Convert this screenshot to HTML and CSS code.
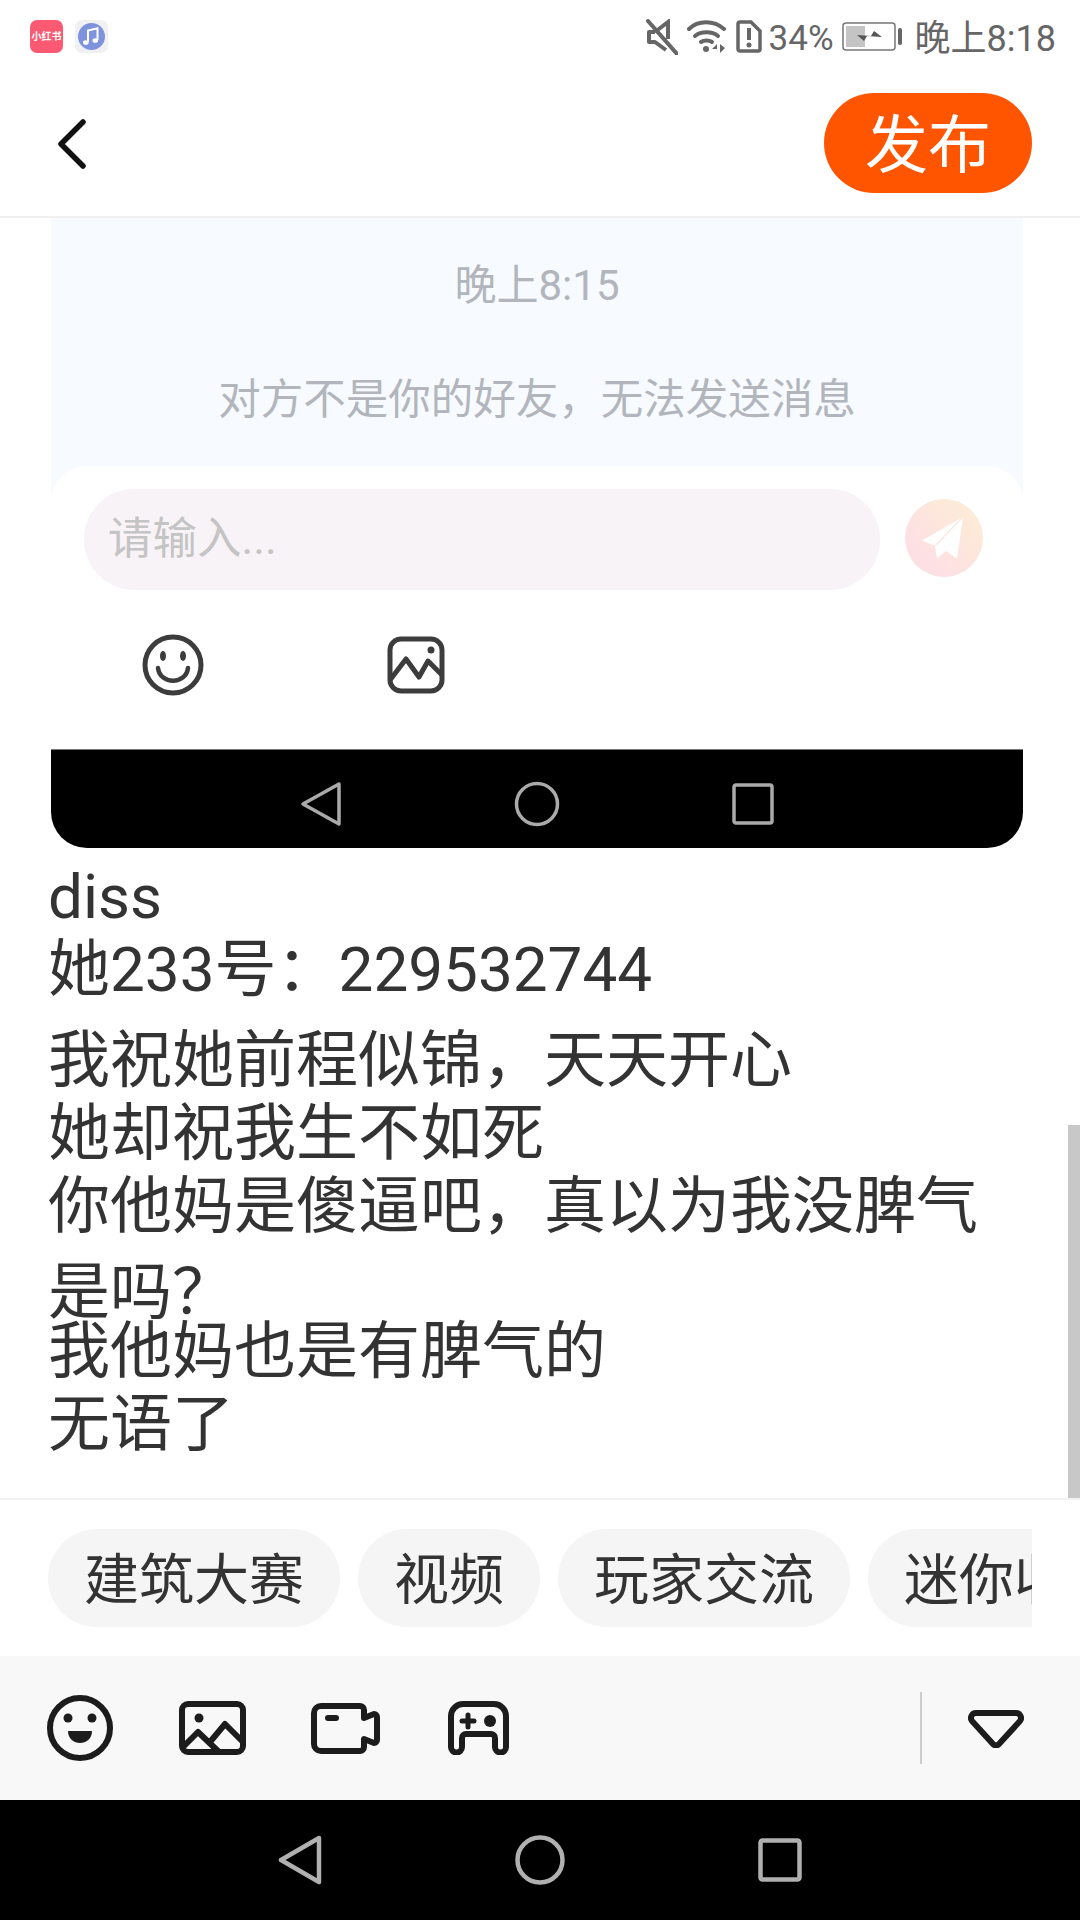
FILE: index.html
```html
<!DOCTYPE html>
<html lang="zh-CN">
<head>
    <meta charset="UTF-8">
    <meta name="viewport" content="width=device-width, initial-scale=1.0">
    <title>发布</title>
    <link rel="stylesheet" href="styles.css">
</head>
<body>
    <!-- barra de status -->
    <div class="status">
        <div class="app-icons">
            <div class="app-red">小红书</div>
            <div class="app-music">
                <svg width="33" height="33" viewBox="0 0 33 33">
                    <circle cx="16.5" cy="16.5" r="13.5" fill="#7f93dc"/>
                    <path d="M13 22V10.5l9.5-2.2V20" fill="none" stroke="#fff" stroke-width="2"/>
                    <ellipse cx="10.8" cy="22.5" rx="2.8" ry="2.3" fill="#fff"/>
                    <ellipse cx="20.3" cy="20.5" rx="2.8" ry="2.3" fill="#fff"/>
                </svg>
            </div>
        </div>
        <div class="status-right">
            <svg class="ic-mute" width="32" height="36" viewBox="0 0 32 36" fill="none" stroke="#666" stroke-width="4">
                <path d="M9 13H3v10h6l11 8" stroke-linejoin="round"/>
                <path d="M9 13 22 3v17"/>
                <path d="M2 2l29 33" stroke-linecap="round"/>
            </svg>
            <svg class="ic-wifi" width="39" height="33" viewBox="0 0 39 33" fill="none" stroke="#666" stroke-width="4" stroke-linecap="round">
                <path d="M2 9C11 0 27 0 37 9"/>
                <path d="M8 16c6-5 17-5 23 0"/>
                <path d="M14 22c3-2 8-2 11 0"/>
                <circle cx="19" cy="29" r="3" fill="#666" stroke="none"/>
                <path d="M30 24l-5 5h5zM33 24v9l5-5z" fill="#666" stroke="none"/>
            </svg>
            <svg class="ic-sim" width="26" height="33" viewBox="0 0 26 33" fill="none">
                <path d="M4 2h11l9 9v18a2 2 0 0 1-2 2H4a2 2 0 0 1-2-2V4a2 2 0 0 1 2-2z" stroke="#666" stroke-width="3.500"/>
                <path d="M13 8v12" stroke="#666" stroke-width="4"/>
                <circle cx="13" cy="25" r="2.500" fill="#666"/>
            </svg>
            <span class="pct">34%</span>
            <svg class="ic-bat" width="60" height="30" viewBox="0 0 60 30">
                <rect x="1" y="1" width="52" height="27" rx="3" fill="#fff" stroke="#777" stroke-width="1.500"/>
                <rect x="4" y="4" width="19" height="21" fill="#c4c4c4"/>
                <path d="M15 13l14 1 3-5 8 6-15-1-3 5z" fill="#555"/>
                <rect x="56" y="6" width="4" height="17" rx="2" fill="#666"/>
            </svg>
            <span class="time">晚上8:18</span>
        </div>
    </div>

    <div class="topbar">
        <svg class="voltar" width="30" height="50" viewBox="0 0 30 50" fill="none" stroke="#111" stroke-width="5.500" stroke-linecap="round" stroke-linejoin="round">
            <path d="M26 3 4 25l22 22"/>
        </svg>
        <button class="publicar">发布</button>
    </div>

    <div class="conteudo">
        <!-- captura de tela dentro do post -->
        <div class="shot">
            <div class="shot-chat">
                <div class="shot-time">晚上8:15</div>
                <div class="shot-msg">对方不是你的好友，无法发送消息</div>
            </div>
            <div class="shot-panel">
                <div class="shot-input-row">
                    <div class="shot-input">请输入...</div>
                    <div class="shot-send">
                        <svg width="46" height="46" viewBox="0 0 46 46">
                            <path d="M42 2 1 25.500 14 31l2 12.500 9-7.500 11 7.500z" fill="#fff"/>
                            <path d="M42 2 14 31" stroke="#fbe8e6" stroke-width="1.500"/>
                        </svg>
                    </div>
                </div>
                <div class="shot-tools">
                    <div class="shot-tool">
                        <svg width="62" height="62" viewBox="0 0 62 62" fill="none" stroke="#3c3c3c" stroke-width="5">
                            <circle cx="31" cy="31" r="28"/>
                            <path d="M16 34c2 17 28 17 30 0" stroke-width="4.500" stroke-linecap="round"/>
                            <ellipse cx="21" cy="22" rx="3" ry="5" fill="#3c3c3c" stroke="none"/>
                            <ellipse cx="41" cy="22" rx="3" ry="5" fill="#3c3c3c" stroke="none"/>
                        </svg>
                    </div>
                    <div class="shot-tool">
                        <svg width="58" height="58" viewBox="0 0 58 58" fill="none" stroke="#3c3c3c" stroke-width="5">
                            <rect x="3" y="3" width="52" height="52" rx="11"/>
                            <path d="M3 44 19 23l13 18 9-16 14 14" stroke-linejoin="round"/>
                            <circle cx="44" cy="14" r="3.500" fill="#3c3c3c" stroke="none"/>
                        </svg>
                    </div>
                </div>
                <div class="shot-nav">
                    <svg width="42" height="46" viewBox="0 0 42 46" fill="none" stroke="#aaa" stroke-width="3.500" stroke-linejoin="round">
                        <path d="M39 3 3 23l36 20z"/>
                    </svg>
                    <svg width="46" height="46" viewBox="0 0 46 46" fill="none" stroke="#aaa" stroke-width="3.500">
                        <circle cx="23" cy="23" r="20.500"/>
                    </svg>
                    <svg width="42" height="42" viewBox="0 0 42 42" fill="none" stroke="#aaa" stroke-width="3.500" stroke-linejoin="round">
                        <rect x="2" y="2" width="38" height="38" rx="2"/>
                    </svg>
                </div>
            </div>
        </div>

        <div class="texto">
            <p class="bloco-a">diss<br>她233号：229532744</p>
            <p class="bloco-b">我祝她前程似锦，天天开心<br>她却祝我生不如死</p>
            <p class="bloco-c">你他妈是傻逼吧，真以为我没脾气是吗？</p>
            <p class="bloco-d">我他妈也是有脾气的<br>无语了</p>
        </div>
        <div class="scrollbar"></div>
    </div>

    <div class="tags">
        <div class="tags-lista">
            <span class="tag">建筑大赛</span>
            <span class="tag">视频</span>
            <span class="tag">玩家交流</span>
            <span class="tag">迷你收藏</span>
        </div>
    </div>

    <div class="toolbar">
        <div class="tool">
            <svg width="66" height="66" viewBox="0 0 66 66" fill="none" stroke="#1c1c1c" stroke-width="6">
                <circle cx="33" cy="33" r="30"/>
                <circle cx="21" cy="23" r="4.500" fill="#1c1c1c" stroke="none"/>
                <circle cx="45" cy="23" r="4.500" fill="#1c1c1c" stroke="none"/>
                <path d="M21 36h24c0 16-24 16-24 0z" fill="#1c1c1c" stroke="none"/>
            </svg>
        </div>
        <div class="tool">
            <svg width="67" height="54" viewBox="0 0 67 54" fill="none" stroke="#1c1c1c" stroke-width="6" stroke-linejoin="round">
                <rect x="3" y="3" width="61" height="48" rx="6"/>
                <circle cx="20" cy="17" r="4.500" fill="#1c1c1c" stroke="none"/>
                <path d="M4 46 19 31l21 20"/>
                <path d="M31 41l15-18 18 18"/>
            </svg>
        </div>
        <div class="tool">
            <svg width="69" height="51" viewBox="0 0 69 51" fill="none" stroke="#1c1c1c" stroke-width="6" stroke-linejoin="round">
                <path d="M10 3h39a4 4 0 0 1 4 4v8l10-4a3 3 0 0 1 3 3v23a3 3 0 0 1-3 3l-10-4v8a4 4 0 0 1-4 4H10a7 7 0 0 1-7-7V10a7 7 0 0 1 7-7z"/>
                <path d="M17 15h8" stroke-linecap="round"/>
            </svg>
        </div>
        <div class="tool">
            <svg width="61" height="54" viewBox="0 0 61 54" fill="none" stroke="#1c1c1c" stroke-width="6">
                <path d="M15 3h31a12 12 0 0 1 12 12v31a5 5 0 0 1-11 0v-9a4 4 0 0 0-4-4H18a4 4 0 0 0-4 4v9a5 5 0 0 1-11 0V15A12 12 0 0 1 15 3z"/>
                <path d="M14 20h12M20 14v12" stroke-width="5" stroke-linecap="round"/>
                <circle cx="42" cy="20" r="6" fill="#1c1c1c" stroke="none"/>
            </svg>
        </div>
        <div class="tool-fim">
            <div class="divisor"></div>
            <svg class="recolher" width="56" height="38" viewBox="0 0 56 38" fill="none" stroke="#1c1c1c" stroke-width="6" stroke-linejoin="round">
                <path d="M8 3h40a5 5 0 0 1 4 8L31 34a4 4 0 0 1-6 0L4 11a5 5 0 0 1 4-8z"/>
            </svg>
        </div>
    </div>

    <div class="navbar">
        <svg width="44" height="50" viewBox="0 0 44 50" fill="none" stroke="#b0b0b0" stroke-width="4.500" stroke-linejoin="round">
            <path d="M41 3 3 25l38 22z"/>
        </svg>
        <svg width="50" height="50" viewBox="0 0 50 50" fill="none" stroke="#b0b0b0" stroke-width="4.500">
            <circle cx="25" cy="25" r="22.500"/>
        </svg>
        <svg width="44" height="44" viewBox="0 0 44 44" fill="none" stroke="#b0b0b0" stroke-width="4.500" stroke-linejoin="round">
            <rect x="2.500" y="2.500" width="39" height="39" rx="2"/>
        </svg>
    </div>
</body>
</html>
```
FILE: styles.css
```css
* {
    box-sizing: border-box;
}
body {
    margin: 0;
    width: 1080px;
    height: 1920px;
    overflow: hidden;
    background-color: #fff;
    font-family: Roboto, "Noto Sans CJK SC", sans-serif;
    color: #333;
}

/* status */
.status {
    height: 72px;
    padding: 20px 24px 0 30px;
    display: flex;
    justify-content: space-between;
    align-items: flex-start;
}
.app-icons {
    display: flex;
    gap: 12px;
}
.app-red {
    width: 33px;
    height: 33px;
    border-radius: 7px;
    background-color: #fb5a72;
    color: #fff;
    font-size: 10px;
    font-weight: 700;
    line-height: 33px;
    text-align: center;
    white-space: nowrap;
}
.app-music {
    width: 33px;
    height: 33px;
    border-radius: 7px;
    background-color: #f1f1f4;
}
.status-right {
    display: flex;
    align-items: center;
    height: 33px;
    color: #666;
}
.ic-mute {
    margin-right: 9px;
}
.ic-wifi {
    margin-right: 10px;
}
.ic-sim {
    margin-right: 7px;
}
.pct {
    font-size: 35px;
    margin: 3px 8px 0 0;
}
.ic-bat {
    margin-right: 13px;
}
.time {
    font-size: 36px;
    margin-top: -3px;
}

/* cabecalho */
.topbar {
    height: 146px;
    padding: 0 48px 2px 57px;
    display: flex;
    justify-content: space-between;
    align-items: center;
    border-bottom: 2px solid #f0f0f0;
}
.voltar {
    margin-top: 2px;
}
.publicar {
    width: 208px;
    height: 100px;
    border: none;
    border-radius: 50px;
    background-color: #ff5500;
    color: #fff;
    font-family: inherit;
    font-size: 63px;
    padding: 0 0 8px;
}

/* area do post */
.conteudo {
    position: relative;
    height: 1280px;
    overflow: hidden;
}
.scrollbar {
    position: absolute;
    right: 0;
    bottom: 0;
    width: 12px;
    height: 373px;
    background-color: #c8c8c8;
}

.shot {
    margin: 0 57px 0 51px;
    height: 630px;
    background: linear-gradient(#f7faff 75%, #f4f3f7 80%);
    border-radius: 0 0 36px 36px;
    overflow: hidden;
}
.shot-chat {
    height: 248px;
    text-align: center;
    color: #b2b6bc;
}
.shot-time {
    font-size: 42px;
    padding-top: 38px;
    line-height: 60px;
}
.shot-msg {
    font-size: 42.5px;
    line-height: 60px;
    padding-top: 54px;
}
.shot-panel {
    height: 382px;
    background-color: #fff;
    border-radius: 36px 36px 0 0;
    display: flex;
    flex-direction: column;
}
.shot-input-row {
    display: flex;
    align-items: center;
    padding: 23px 0 0 33px;
}
.shot-input {
    width: 796px;
    height: 101px;
    padding-left: 24px;
    border-radius: 50px;
    background-color: #f8f3f7;
    color: #c4c4c4;
    font-size: 44.5px;
    line-height: 100px;
}
.shot-send {
    width: 78px;
    height: 78px;
    margin: -3px 0 0 25px;
    border-radius: 50%;
    background: linear-gradient(45deg, #fde0e4 25%, #fdeed3);
    display: flex;
    justify-content: center;
    align-items: center;
}
.shot-tools {
    flex: 1;
    padding-bottom: 10px;
    display: grid;
    grid-template-columns: repeat(4, 243px);
    align-items: center;
}
.shot-tool {
    display: flex;
    justify-content: center;
}
.shot-nav {
    height: 99px;
    padding-top: 10px;
    border-top: 1px solid #777;
    background-color: #000;
    display: flex;
    justify-content: center;
    align-items: center;
    gap: 172px;
}

.texto {
    padding: 0 70px 0 48px;
    font-size: 62px;
}
.texto p {
    margin: 0;
}
.bloco-a {
    padding-top: 12px;
    line-height: 73px;
}
.bloco-b {
    padding-top: 18px;
    line-height: 73px;
}
.texto .bloco-c {
    margin-top: -6px;
    line-height: 86px;
}
.texto .bloco-d {
    margin-top: -21px;
    line-height: 73px;
}

/* etiquetas */
.tags {
    height: 158px;
    padding: 29px 48px 0;
    border-top: 2px solid #f2f2f2;
}
.tags-lista {
    display: flex;
    gap: 18px;
    overflow: hidden;
}
.tag {
    flex: none;
    height: 98px;
    padding: 0 36px;
    border-radius: 49px;
    background-color: #f5f5f5;
    color: #333;
    font-size: 55px;
    line-height: 102px;
}

/* barra de ferramentas */
.toolbar {
    height: 144px;
    padding-left: 13px;
    background-color: #f8f8f8;
    display: flex;
    align-items: center;
}
.tool {
    width: 133px;
    display: flex;
    justify-content: center;
}
.tool-fim {
    margin-left: auto;
    margin-right: 56px;
    display: flex;
    align-items: center;
    gap: 46px;
}
.divisor {
    width: 2px;
    height: 72px;
    background-color: #ccc;
}
.recolher {
    margin-top: 2px;
}

/* navegacao */
.navbar {
    height: 120px;
    background-color: #000;
    display: flex;
    justify-content: center;
    align-items: center;
    gap: 193px;
}
```
